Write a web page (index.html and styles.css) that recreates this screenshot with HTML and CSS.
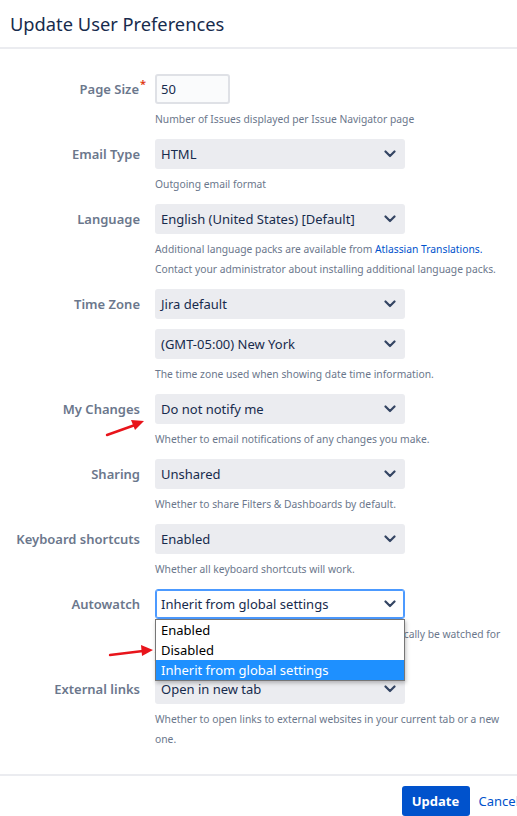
FILE: index.html
```html
<!DOCTYPE html>
<html lang="en">
<head>
<meta charset="utf-8">
<title>Update User Preferences</title>
<link rel="stylesheet" href="styles.css">
</head>
<body>
<div class="dialog">
  <header class="dlg-head">
    <h2 class="dlg-title">Update User Preferences</h2>
  </header>
  <form class="dlg-body">
    <div class="field">
      <label class="lbl">Page Size<span class="req">*</span></label>
      <div class="ctrl">
        <div class="text-input">50</div>
        <div class="desc">Number of Issues displayed per Issue Navigator page</div>
      </div>
    </div>
    <div class="field">
      <label class="lbl">Email Type</label>
      <div class="ctrl">
        <div class="select"><span>HTML</span><svg class="chev" viewBox="0 0 12 8"><path d="M1.5 1.5 L6 6 L10.5 1.5"/></svg></div>
        <div class="desc">Outgoing email format</div>
      </div>
    </div>
    <div class="field">
      <label class="lbl">Language</label>
      <div class="ctrl">
        <div class="select"><span>English (United States) [Default]</span><svg class="chev" viewBox="0 0 12 8"><path d="M1.5 1.5 L6 6 L10.5 1.5"/></svg></div>
        <div class="desc">Additional language packs are available from <a class="link" href="#">Atlassian Translations.</a><br>Contact your administrator about installing additional language packs.</div>
      </div>
    </div>
    <div class="field">
      <label class="lbl">Time Zone</label>
      <div class="ctrl">
        <div class="select"><span>Jira default</span><svg class="chev" viewBox="0 0 12 8"><path d="M1.5 1.5 L6 6 L10.5 1.5"/></svg></div>
        <div class="select second"><span>(GMT-05:00) New York</span><svg class="chev" viewBox="0 0 12 8"><path d="M1.5 1.5 L6 6 L10.5 1.5"/></svg></div>
        <div class="desc">The time zone used when showing date time information.</div>
      </div>
    </div>
    <div class="field">
      <label class="lbl">My Changes</label>
      <div class="ctrl">
        <div class="select"><span>Do not notify me</span><svg class="chev" viewBox="0 0 12 8"><path d="M1.5 1.5 L6 6 L10.5 1.5"/></svg></div>
        <div class="desc">Whether to email notifications of any changes you make.</div>
      </div>
    </div>
    <div class="field">
      <label class="lbl">Sharing</label>
      <div class="ctrl">
        <div class="select"><span>Unshared</span><svg class="chev" viewBox="0 0 12 8"><path d="M1.5 1.5 L6 6 L10.5 1.5"/></svg></div>
        <div class="desc">Whether to share Filters &amp; Dashboards by default.</div>
      </div>
    </div>
    <div class="field">
      <label class="lbl">Keyboard shortcuts</label>
      <div class="ctrl">
        <div class="select"><span>Enabled</span><svg class="chev" viewBox="0 0 12 8"><path d="M1.5 1.5 L6 6 L10.5 1.5"/></svg></div>
        <div class="desc">Whether all keyboard shortcuts will work.</div>
      </div>
    </div>
    <div class="field">
      <label class="lbl">Autowatch</label>
      <div class="ctrl">
        <div class="select-wrap">
          <div class="select focused"><span>Inherit from global settings</span><svg class="chev" viewBox="0 0 12 8"><path d="M1.5 1.5 L6 6 L10.5 1.5"/></svg></div>
          <ul class="menu">
            <li class="opt">Enabled</li>
            <li class="opt">Disabled</li>
            <li class="opt selected">Inherit from global settings</li>
          </ul>
        </div>
        <div class="desc">Issues that you create or comment on will automatically be watched for<br>you by default.</div>
      </div>
    </div>
    <div class="field">
      <label class="lbl">External links</label>
      <div class="ctrl">
        <div class="select"><span>Open in new tab</span><svg class="chev" viewBox="0 0 12 8"><path d="M1.5 1.5 L6 6 L10.5 1.5"/></svg></div>
        <div class="desc">Whether to open links to external websites in your current tab or a new one.</div>
      </div>
    </div>
  </form>
  <footer class="dlg-foot">
    <button class="btn-primary" type="button">Update</button>
    <a class="btn-link" href="#">Cancel</a>
  </footer>
  <svg class="annot annot-1" width="60" height="30" viewBox="0 0 60 30"><line x1="2" y1="24" x2="30" y2="14" stroke="#e8141b" stroke-width="2.4" stroke-linecap="round"/><polygon points="39,10 26,9 30,19" fill="#e8141b"/></svg>
  <svg class="annot annot-2" width="60" height="30" viewBox="0 0 60 30"><line x1="2" y1="15" x2="35" y2="11" stroke="#e8141b" stroke-width="2.4" stroke-linecap="round"/><polygon points="45,10 33,5 34,16" fill="#e8141b"/></svg>
</div>
</body>
</html>
```
FILE: styles.css
```css
html, body {
  margin: 0;
  padding: 0;
  overflow: hidden;
  background: #ffffff;
}
body {
  font-family: "Noto Sans", "Open Sans", sans-serif;
  color: #172b4d;
}
.dialog {
  position: relative;
  width: 540px;
}
.dlg-head {
  height: 47px;
  border-bottom: 2px solid #ebecf0;
  display: flex;
  align-items: center;
  padding: 0 10px;
}
.dlg-title {
  margin: 0;
  font-size: 18.3px;
  font-weight: 400;
  color: #172b4d;
  line-height: 24px;
}
.dlg-body {
  margin: 0;
  padding: 25px 0 15px 0;
}
.field {
  display: grid;
  grid-template-columns: 140px 352px;
  column-gap: 15px;
  margin-bottom: 10px;
}
.lbl {
  text-align: right;
  font-size: 13px;
  font-weight: 600;
  color: #6b778c;
  line-height: 30px;
  white-space: nowrap;
}
.req {
  color: #de350b;
  font-size: 11px;
  vertical-align: top;
  line-height: 20px;
  margin-right: -6px;
  margin-left: 1px;
}
.ctrl {
  display: flex;
  flex-direction: column;
}
.text-input {
  box-sizing: border-box;
  width: 75px;
  height: 30px;
  border: 2px solid #dfe1e6;
  border-radius: 3px;
  background: #fafbfc;
  font-size: 13px;
  line-height: 26px;
  padding: 0 4px;
  color: #172b4d;
}
.select {
  box-sizing: border-box;
  width: 250px;
  height: 30px;
  border-radius: 3px;
  background: #ebecf0;
  display: flex;
  align-items: center;
  justify-content: space-between;
  padding: 0 9px 0 6px;
  font-size: 13px;
  color: #172b4d;
}
.select.second {
  margin-top: 10px;
}
.select.focused {
  background: #ffffff;
  border: 1px solid #4c9aff;
  box-shadow: 0 0 0 1px #4c9aff inset;
  padding-left: 5px;
  padding-right: 8px;
}
.chev {
  width: 12px;
  height: 8px;
  flex: none;
}
.chev path {
  fill: none;
  stroke: #344563;
  stroke-width: 2.2;
  stroke-linecap: round;
  stroke-linejoin: round;
}
.desc {
  margin-top: 5px;
  font-size: 10.3px;
  line-height: 20px;
  color: #6b778c;
}
.link {
  color: #0052cc;
  text-decoration: none;
}
.select-wrap {
  position: relative;
  width: 250px;
}
.menu {
  position: absolute;
  top: 30px;
  left: 0;
  box-sizing: border-box;
  width: 250px;
  margin: 0;
  padding: 0;
  list-style: none;
  background: #ffffff;
  border: 1px solid #767676;
  box-shadow: 1px 2px 4px rgba(0, 0, 0, 0.25);
  z-index: 2;
}
.opt {
  height: 20px;
  line-height: 20px;
  padding: 0 5px;
  font-size: 13px;
  color: #000000;
}
.opt.selected {
  background: #1e90ff;
  color: #ffffff;
}
.dlg-foot {
  border-top: 2px solid #ebecf0;
  display: flex;
  justify-content: flex-end;
  align-items: center;
  gap: 9px;
  padding: 10px 21px 10px 14px;
}
.btn-primary {
  height: 30px;
  width: 68px;
  border: 0;
  border-radius: 3px;
  background: #0052cc;
  color: #ffffff;
  font-family: "Noto Sans", sans-serif;
  font-size: 13px;
  font-weight: 700;
  padding: 0;
}
.btn-link {
  color: #0052cc;
  text-decoration: none;
  font-size: 13px;
}
.annot {
  position: absolute;
  z-index: 3;
}
.annot-1 {
  left: 105px;
  top: 411px;
}
.annot-2 {
  left: 108px;
  top: 640px;
}
```
